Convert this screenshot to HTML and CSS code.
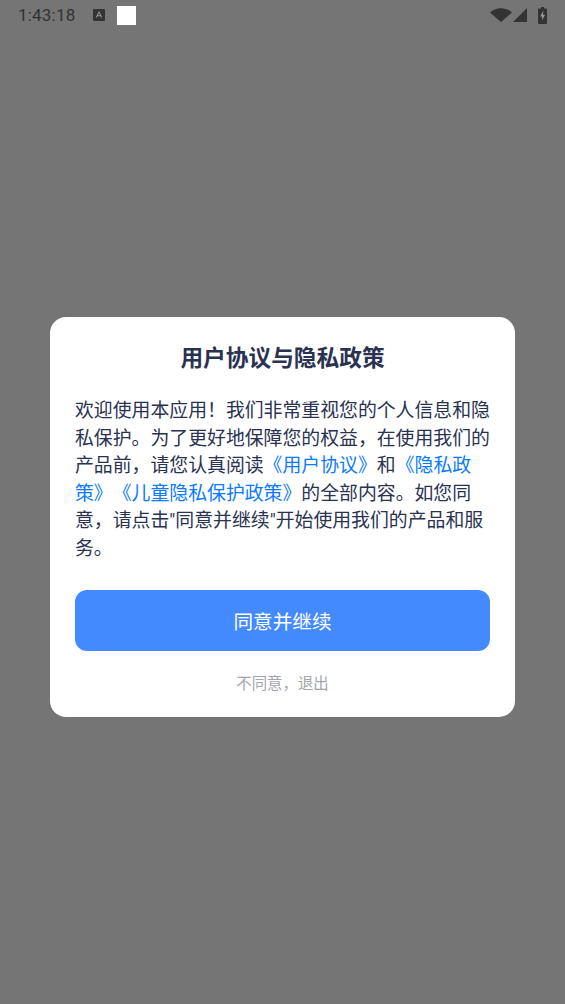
FILE: index.html
```html
<!DOCTYPE html>
<html lang="zh-CN">
<head>
<meta charset="utf-8">
<title>用户协议与隐私政策</title>
<link rel="stylesheet" href="styles.css">
</head>
<body>
<div class="screen">
  <div class="status">
    <div class="status-left">
      <span class="time">1:43:18</span>
      <svg class="icon-a" viewBox="0 0 12 12" width="12" height="12"><rect x="0" y="0" width="12" height="12" rx="1" fill="#333"/><path d="M2.800 8.600 5.600 2.400h.8l2.800 6.200H8l-.5-1.300H4.500L4 8.600zM4.900 6.300h2.200L6 3.800z" fill="#999"/></svg>
      <span class="white-box"></span>
    </div>
    <div class="status-right">
      <svg class="icon-wifi" viewBox="0 0 22 14" width="22" height="14"><path d="M0 4.500C2.800 1.800 6.600.2 11 .2s8.200 1.600 11 4.300L11 14z" fill="#333"/></svg>
      <svg class="icon-signal" viewBox="0 0 14 14" width="14" height="14"><path d="M14 0v14H0z" fill="#333"/></svg>
      <svg class="icon-battery" viewBox="0 0 9 17" width="9" height="17"><path d="M3 0h3v1.500h2a1 1 0 0 1 1 1V16a1 1 0 0 1-1 1H1a1 1 0 0 1-1-1V2.500a1 1 0 0 1 1-1h2z" fill="#333"/><path d="M5.400 3.500 2.200 9.500h2v4L7 7.800H5z" fill="#999"/></svg>
    </div>
  </div>
  <div class="dialog">
    <h1 class="title">用户协议与隐私政策</h1>
    <p class="body">欢迎使用本应用！我们非常重视您的个人信息和隐私保护。为了更好地保障您的权益，在使用我们的产品前，请您认真阅读<a class="link">《用户协议》</a>和<a class="link">《隐私政策》《儿童隐私保护政策》</a>的全部内容。如您同意，请点击"同意并继续"开始使用我们的产品和服务。</p>
    <button class="agree">同意并继续</button>
    <div class="decline">不同意，退出</div>
  </div>
</div>
</body>
</html>
```
FILE: styles.css
```css
* { box-sizing: border-box; }
html, body { margin: 0; padding: 0; }
body {
  width: 565px;
  height: 1004px;
  overflow: hidden;
  font-family: "Noto Sans CJK SC", "Roboto", sans-serif;
}
.screen {
  width: 565px;
  height: 1004px;
  background: #757575;
  display: flex;
  flex-direction: column;
  align-items: center;
}
.status {
  width: 100%;
  height: 30px;
  padding: 0 18px;
  display: flex;
  justify-content: space-between;
  align-items: center;
}
.status-left { display: flex; align-items: center; }
.time {
  font-family: "Roboto", sans-serif;
  font-size: 17px;
  color: #333;
  letter-spacing: 0.2px;
}
.icon-a { margin-left: 18px; }
.white-box {
  width: 19px;
  height: 19px;
  margin-left: 12px;
  background: #fff;
}
.status-right { display: flex; align-items: center; }
.icon-wifi { margin-right: 1px; }
.icon-signal { margin-right: 11px; }
.dialog {
  width: 465px;
  height: 400px;
  margin-top: 287px;
  background: #fff;
  border-radius: 16px;
  padding: 24px 25px 0;
  display: flex;
  flex-direction: column;
}
.title {
  margin: -2px 0 0;
  font-size: 22.700px;
  line-height: 36px;
  font-weight: 700;
  color: #2a3252;
  text-align: center;
}
.body {
  margin: 22px 0 0;
  font-family: "Roboto", "Noto Sans CJK SC", sans-serif;
  font-size: 18.880px;
  line-height: 27.600px;
  color: #2a3252;
  text-spacing-trim: space-all;
  font-kerning: none;
}
.link { color: #0a7aff; }
.agree {
  margin-top: 27px;
  width: 100%;
  height: 61px;
  flex: none;
  border: 0;
  border-radius: 12px;
  background: #448aff;
  color: #fff;
  font-family: inherit;
  font-size: 19.600px;
}
.decline {
  margin-top: 20px;
  text-align: center;
  font-size: 15.400px;
  line-height: 22px;
  color: #a3a6ad;
  text-spacing-trim: space-all;
}
```
